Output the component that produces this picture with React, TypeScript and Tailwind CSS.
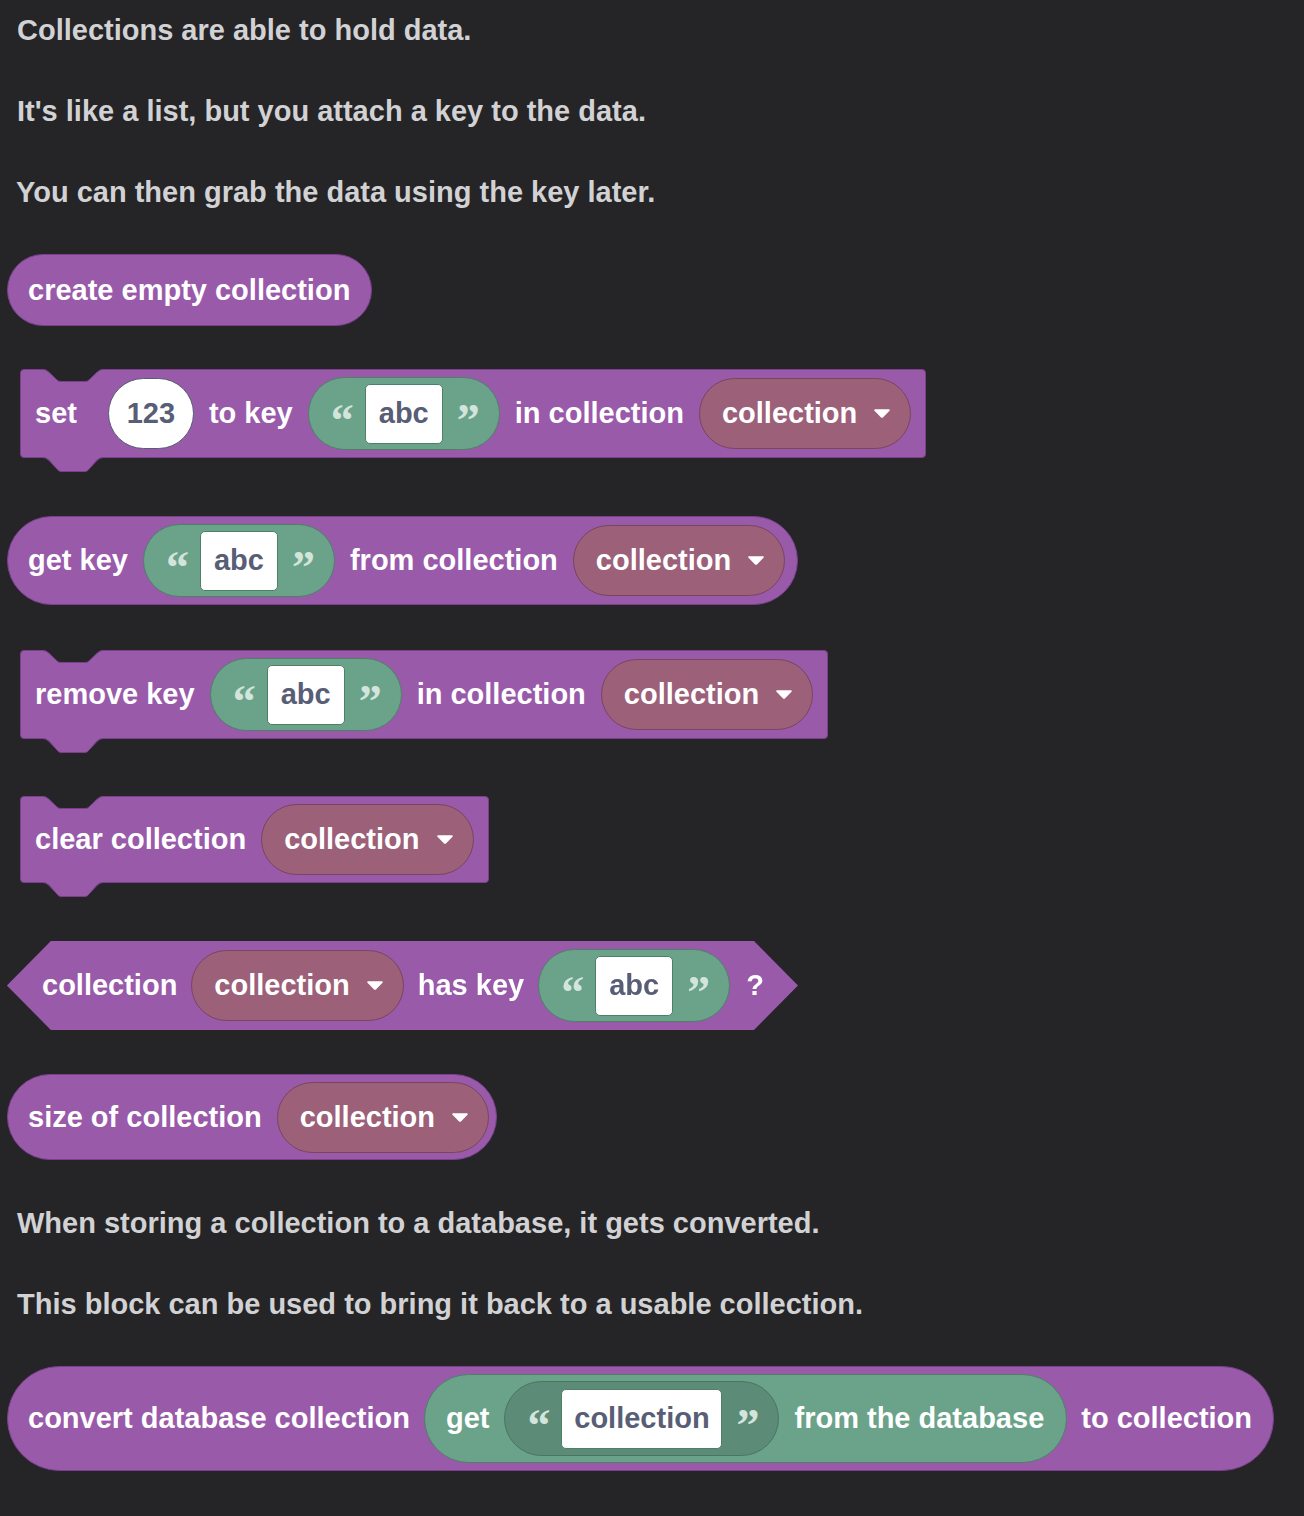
import React from "react";

const FONT = { fontFamily: '"Liberation Sans", Arial, sans-serif' };

function T({ children, className = "" }: { children: React.ReactNode; className?: string }) {
  return (
    <span className={"text-white font-bold text-[29px] leading-none whitespace-nowrap " + className}>{children}</span>
  );
}

function Arrow() {
  return (
    <svg width="18" height="11" viewBox="0 0 18 11" className="shrink-0">
      <path d="M2.2 1.2 L15.8 1.2 Q17.6 1.2 16.5 2.7 L10.2 9.3 Q9 10.4 7.8 9.3 L1.5 2.7 Q0.4 1.2 2.2 1.2 Z" fill="#ffffff" />
    </svg>
  );
}

function Dropdown() {
  return (
    <div className="flex items-center h-[71px] rounded-full bg-[#9c6079] border border-[#7a4460] pl-[22px] pr-[19px] gap-[16px] shrink-0">
      <T>collection</T>
      <Arrow />
    </div>
  );
}

function Quote({ open }: { open: boolean }) {
  return (
    <span
      className="text-[#d3e4dc] font-bold text-[46px] leading-none translate-y-[7px] w-[20px] text-center shrink-0"
      style={{ fontFamily: '"Liberation Serif", "Times New Roman", serif' }}
    >
      {open ? "\u201C" : "\u201D"}
    </span>
  );
}

function StringField({ text = "abc", dark = false, w = "w-[78px]" }: { text?: string; dark?: boolean; w?: string }) {
  return (
    <div
      className={
        "flex items-center rounded-full border px-[22px] gap-[14px] shrink-0 " +
        (dark ? "h-[75px] bg-[#5c8b77] border-[#4b7563]" : "h-[73px] bg-[#6aa38a] border-[#4e8068]")
      }
    >
      <Quote open />
      <div className={"h-[60px] " + w + " bg-white rounded-[5px] border border-[#4f7f69] flex items-center justify-center"}>
        <span className="text-[#575e75] font-bold text-[29px] leading-none">{text}</span>
      </div>
      <Quote open={false} />
    </div>
  );
}

function NumberField() {
  return (
    <div className="h-[71px] w-[86px] rounded-full bg-white border-[1.5px] border-[#575e75] flex items-center justify-center shrink-0">
      <span className="text-[#575e75] font-bold text-[29px] leading-none">123</span>
    </div>
  );
}

function Statement({ children, className = "" }: { children: React.ReactNode; className?: string }) {
  return (
    <div className={"relative flex items-center bg-[#995aaa] border border-[#7b3f8e] rounded-[4px] h-[89px] pl-[14px] pr-[14px] gap-[15px] " + className}>
      <svg width="60" height="14" viewBox="0 0 60 14" className="absolute -top-px left-[22px]">
        <path d="M0 0 Q3 0 6 3 L14 11 Q15.5 12.5 18 12.5 L42 12.5 Q44.5 12.5 46 11 L54 3 Q57 0 60 0 Z" fill="#252527" />
        <path d="M0 0.5 Q3 0.5 6 3.5 L14 11 Q15.5 12.5 18 12.5 L42 12.5 Q44.5 12.5 46 11 L54 3.5 Q57 0.5 60 0.5" fill="none" stroke="#7b3f8e" strokeWidth="1" />
      </svg>
      <svg width="60" height="16" viewBox="0 0 60 16" className="absolute top-full left-[22px]">
        <path d="M0 0 Q3 0 6 3 L14 12 Q15.5 14.5 18 14.5 L42 14.5 Q44.5 14.5 46 12 L54 3 Q57 0 60 0 Z" fill="#995aaa" />
        <path d="M0 0.5 Q3 0.5 6 3.5 L14 12 Q15.5 14.5 18 14.5 L42 14.5 Q44.5 14.5 46 12 L54 3.5 Q57 0.5 60 0.5" fill="none" stroke="#7b3f8e" strokeWidth="1" />
      </svg>
      {children}
    </div>
  );
}

function Reporter({ children, className = "" }: { children: React.ReactNode; className?: string }) {
  return (
    <div className={"flex items-center bg-[#995aaa] border border-[#7b3f8e] rounded-full pl-[20px] pr-[12px] gap-[15px] " + className}>
      {children}
    </div>
  );
}

function P({ children, className = "" }: { children: React.ReactNode; className?: string }) {
  return (
    <p className={"text-[#d2d2d4] font-bold text-[29px] leading-[36px] h-[36px] whitespace-nowrap pl-[17px] " + className}>{children}</p>
  );
}

export default function App() {
  return (
    <div className="min-h-[1516px] w-full bg-[#252527] flex flex-col items-start" style={FONT}>
      <P className="mt-[12px]">Collections are able to hold data.</P>
      <P className="mt-[45px]">It's like a list, but you attach a key to the data.</P>
      <P className="mt-[45px] !pl-[16px]">You can then grab the data using the key later.</P>

      <div className="mt-[44px] ml-[7px] h-[72px] flex items-center bg-[#995aaa] border border-[#7b3f8e] rounded-full pl-[20px] pr-[21px]">
        <T>create empty collection</T>
      </div>

      <Statement className="mt-[43px] ml-[20px]">
        <T className="mr-[16px]">set</T>
        <NumberField />
        <T>to key</T>
        <StringField />
        <T>in collection</T>
        <Dropdown />
      </Statement>

      <Reporter className="mt-[58px] ml-[7px] h-[89px]">
        <T>get key</T>
        <StringField />
        <T>from collection</T>
        <Dropdown />
      </Reporter>

      <Statement className="mt-[45px] ml-[20px]">
        <T>remove key</T>
        <StringField />
        <T>in collection</T>
        <Dropdown />
      </Statement>

      <Statement className="mt-[57px] ml-[20px] !h-[87px]">
        <T>clear collection</T>
        <Dropdown />
      </Statement>

      <div className="mt-[58px] ml-[7px] [filter:drop-shadow(0_0_0.6px_#6f3782)]">
        <div className="flex items-center h-[89px] bg-[#995aaa] pl-[35px] pr-[34px] gap-[14px] [clip-path:polygon(44px_0,calc(100%_-_44px)_0,100%_50%,calc(100%_-_44px)_100%,44px_100%,0_50%)]">
          <T>collection</T>
          <Dropdown />
          <T>has key</T>
          <StringField />
          <T className="ml-[2px]">?</T>
        </div>
      </div>

      <Reporter className="mt-[44px] ml-[7px] h-[86px] !pr-[7px]">
        <T>size of collection</T>
        <Dropdown />
      </Reporter>

      <P className="mt-[45px]">When storing a collection to a database, it gets converted.</P>
      <P className="mt-[45px]">This block can be used to bring it back to a usable collection.</P>

      <div className="mt-[44px] ml-[7px] h-[105px] flex items-center bg-[#995aaa] border border-[#7b3f8e] rounded-full pl-[20px] pr-[21px] gap-[14px]">
        <T>convert database collection</T>
        <div className="flex items-center h-[89px] rounded-full bg-[#6aa38a] border border-[#4e8068] pl-[21px] pr-[22px] gap-[15px]">
          <T>get</T>
          <StringField text="collection" dark w="w-[161px]" />
          <T>from the database</T>
        </div>
        <T>to collection</T>
      </div>
    </div>
  );
}
